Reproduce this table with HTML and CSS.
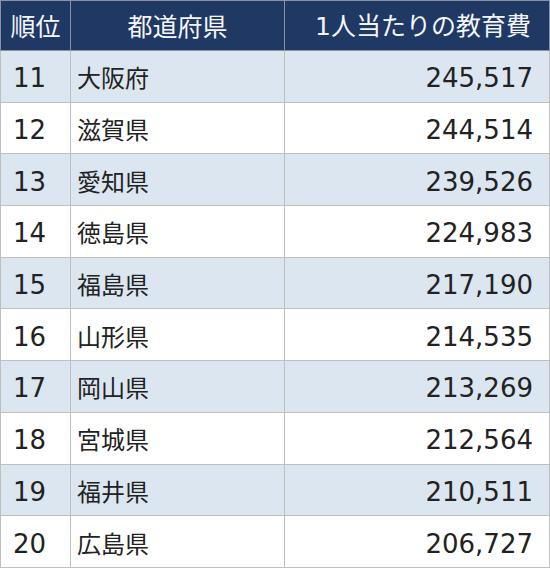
FILE: index.html
```html
<!DOCTYPE html>
<html lang="ja">
<head>
<meta charset="utf-8">
<link rel="stylesheet" href="styles.css">
</head>
<body>
<table class="rank">
  <colgroup>
    <col class="c-rank">
    <col class="c-pref">
    <col class="c-cost">
  </colgroup>
  <thead>
    <tr><th class="h-rank">順位</th><th class="h-pref">都道府県</th><th class="h-cost"><span class="num">1</span>人当たりの教育費</th></tr>
  </thead>
  <tbody>
    <tr><td class="rk">11</td><td class="pf">大阪府</td><td class="cs">245,517</td></tr>
    <tr><td class="rk">12</td><td class="pf">滋賀県</td><td class="cs">244,514</td></tr>
    <tr><td class="rk">13</td><td class="pf">愛知県</td><td class="cs">239,526</td></tr>
    <tr><td class="rk">14</td><td class="pf">徳島県</td><td class="cs">224,983</td></tr>
    <tr><td class="rk">15</td><td class="pf">福島県</td><td class="cs">217,190</td></tr>
    <tr><td class="rk">16</td><td class="pf">山形県</td><td class="cs">214,535</td></tr>
    <tr><td class="rk">17</td><td class="pf">岡山県</td><td class="cs">213,269</td></tr>
    <tr><td class="rk">18</td><td class="pf">宮城県</td><td class="cs">212,564</td></tr>
    <tr><td class="rk">19</td><td class="pf">福井県</td><td class="cs">210,511</td></tr>
    <tr><td class="rk">20</td><td class="pf">広島県</td><td class="cs">206,727</td></tr>
  </tbody>
</table>
</body>
</html>
```
FILE: styles.css
```css
html, body {
  margin: 0;
  padding: 0;
  background: #ffffff;
}
body {
  font-family: "Noto Sans CJK JP", "Noto Sans", sans-serif;
  color: #222222;
}
.rank {
  border-collapse: collapse;
  table-layout: fixed;
  width: 549px;
  border: 1px solid #bfbfbf;
}
.c-rank { width: 70px; }
.c-pref { width: 214px; }
.c-cost { width: 265px; }
.rank th,
.rank td {
  border: 1px solid #bfbfbf;
  padding: 0;
  font-size: 24px;
  font-weight: 400;
  line-height: 1;
  white-space: nowrap;
}
.rank thead tr {
  height: 50px;
}
.rank th {
  background: #1f3864;
  color: #f4f6fa;
  border-color: #8a93a6;
  font-size: 25px;
}
.rank .h-rank { text-align: center; }
.rank .h-pref { text-align: center; }
.rank .h-cost { text-align: right; padding-right: 18px; }
.num {
  font-family: "DejaVu Sans", "Noto Sans CJK JP", sans-serif;
}
.rank tbody tr {
  height: 51.7px;
}
.rank tbody tr:nth-child(odd) td {
  background: #dce6f1;
}
.rank .rk {
  text-align: left;
  padding-left: 12px;
  padding-top: 4px;
  font-family: "DejaVu Sans", "Noto Sans CJK JP", sans-serif;
  font-size: 26px;
}
.rank .pf {
  text-align: left;
  padding-left: 6px;
  padding-top: 2px;
}
.rank .cs {
  text-align: right;
  padding-right: 16px;
  padding-top: 4px;
  font-family: "DejaVu Sans", "Noto Sans CJK JP", sans-serif;
  font-size: 26px;
}
```
